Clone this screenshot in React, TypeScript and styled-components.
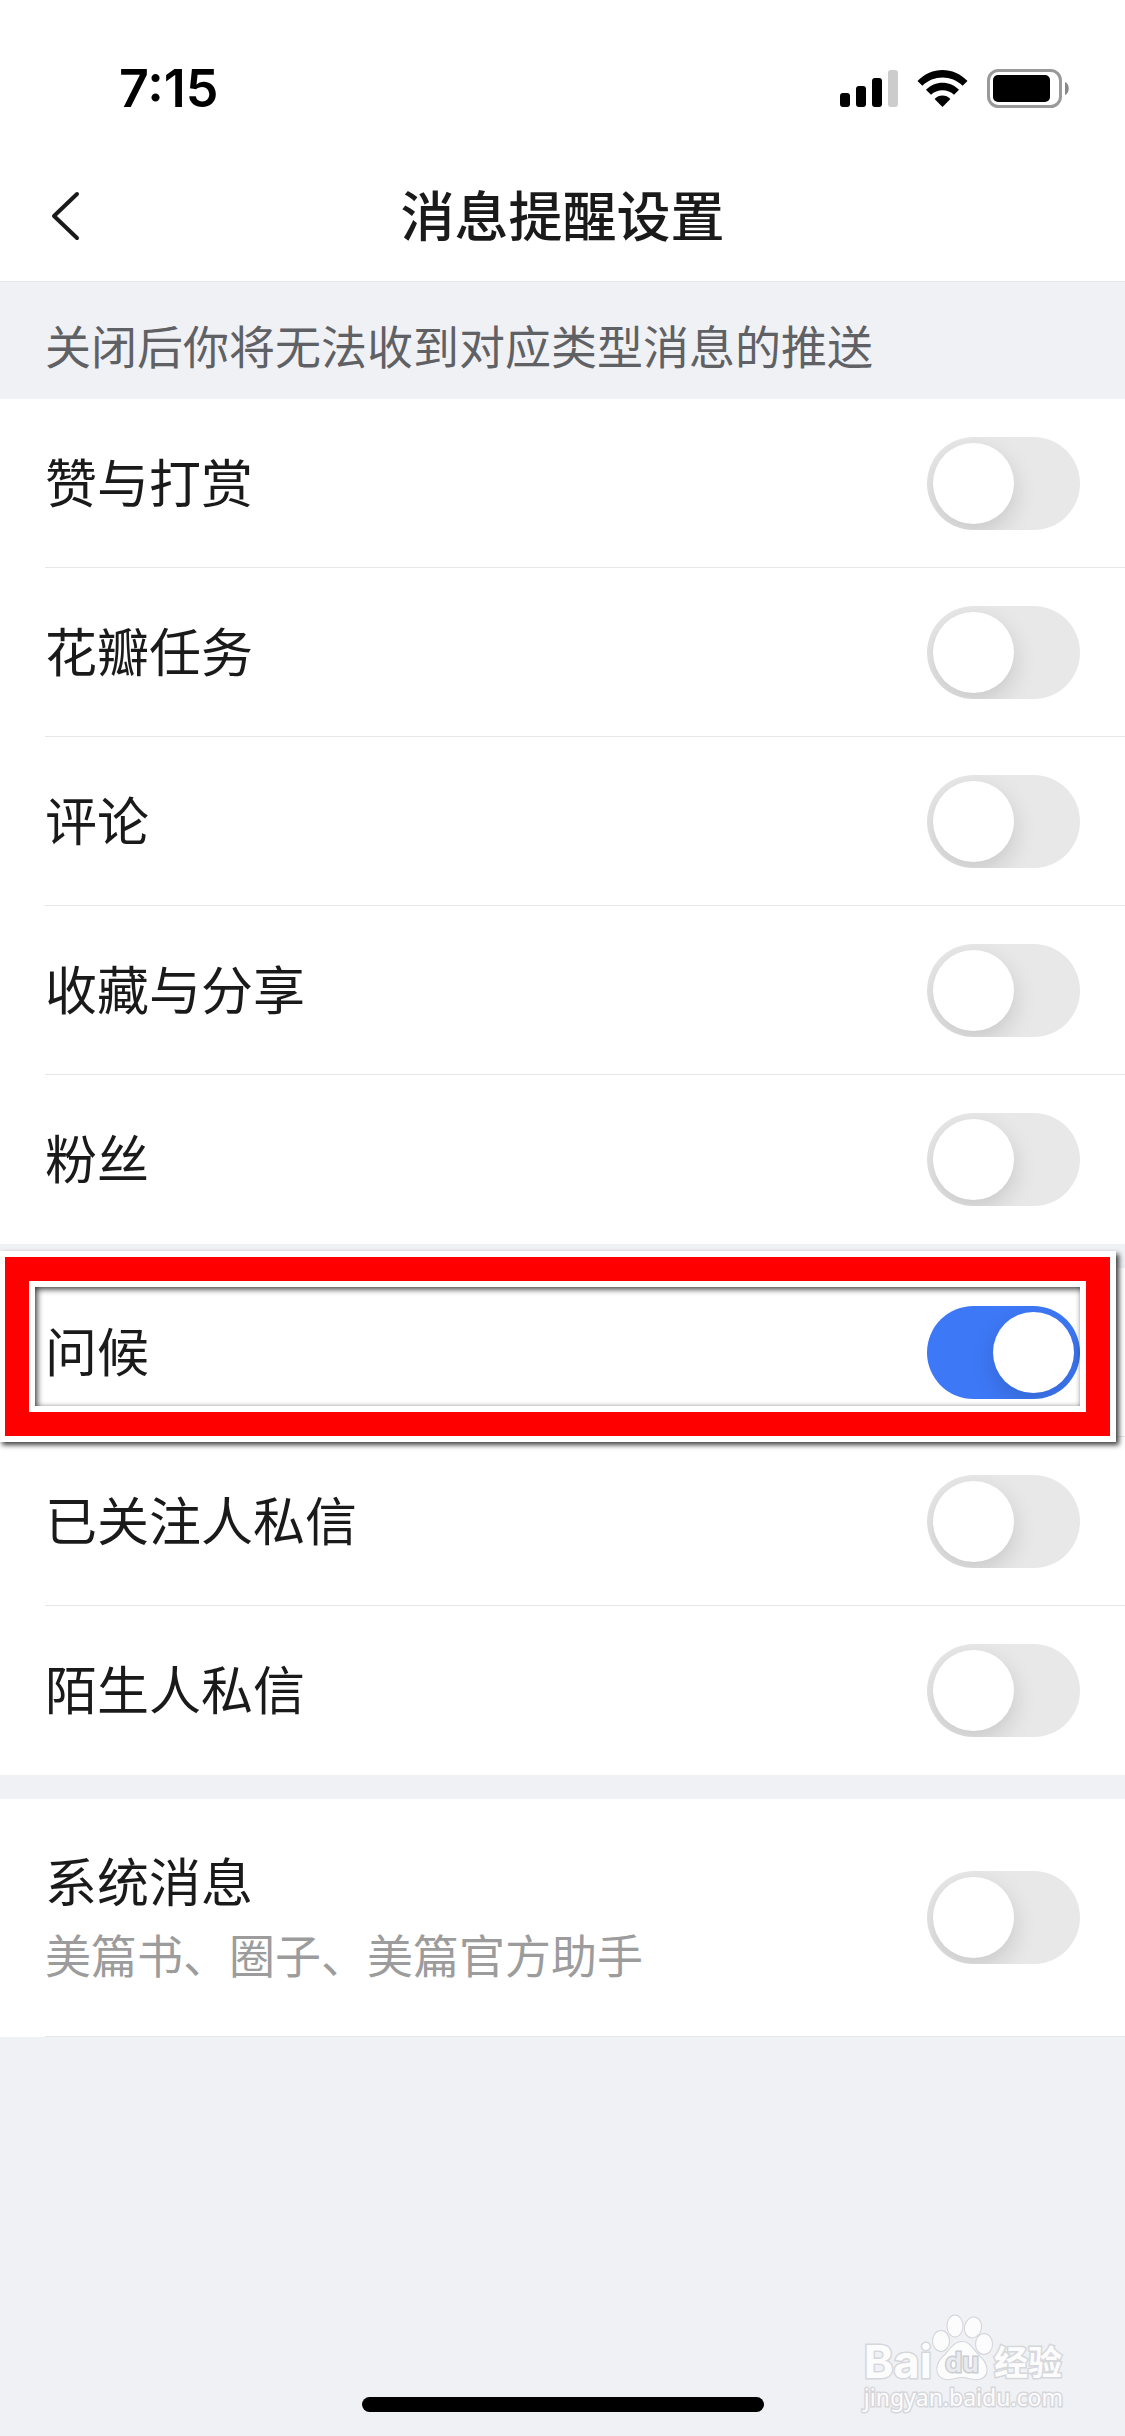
import React, { useState } from "react";
import styled, { createGlobalStyle } from "styled-components";

const cjk = `"Noto Sans CJK SC", "Noto Sans", sans-serif`;

const GlobalStyle = createGlobalStyle`
  *, *::before, *::after { box-sizing: border-box; }
  body { margin: 0; background: #f0f1f5; }
`;

const Page = styled.div`
  position: relative;
  display: flex;
  flex-direction: column;
  min-height: 100vh;
  overflow: hidden;
  background: #f0f1f5;
  color: #1a1a1a;
  font-family: ${cjk};
`;

const StatusBar = styled.div`
  display: flex;
  align-items: center;
  justify-content: space-between;
  height: 132px;
  padding: 45px 56px 0 119px;
  background: #fff;
`;

const Time = styled.time`
  color: #000;
  font: 600 52px/87px Inter, sans-serif;
`;

const StatusIcons = styled.div`
  display: flex;
  align-items: center;
  gap: 19px;
`;

const NavBar = styled.header`
  display: grid;
  grid-template-columns: 84px 1fr 84px;
  align-items: center;
  height: 150px;
  padding: 18px 45px 0;
  border-bottom: 1px solid #e6e7ea;
  background: #fff;
`;

const BackButton = styled.button`
  display: flex;
  align-items: center;
  height: 84px;
  padding: 0 5px;
  border: 0;
  background: none;
  color: #1a1a1a;
`;

const Title = styled.h1`
  margin: 0;
  padding-bottom: 4px;
  text-align: center;
  font-size: 54px;
  font-weight: 500;
  line-height: 72px;
`;

const Notice = styled.p`
  margin: 0;
  padding: 30px 45px 22px;
  color: #606164;
  font-size: 46px;
  line-height: 65px;
`;

const Groups = styled.main`
  display: flex;
  flex-direction: column;
  gap: 24px;
`;

const Group = styled.section`
  background: #fff;
`;

const Row = styled.div<{ $tall?: boolean; $divider?: boolean }>`
  position: relative;
  display: flex;
  align-items: center;
  justify-content: space-between;
  min-height: ${(p) => (p.$tall ? 238 : 169)}px;
  padding: ${(p) => (p.$tall ? "0 45px 1px" : "0 45px")};

  &::after {
    content: "";
    display: ${(p) => (p.$divider ? "block" : "none")};
    position: absolute;
    left: 45px;
    right: 0;
    bottom: 0;
    height: 1px;
    background: #e6e6e6;
  }
`;

const RowText = styled.label`
  display: flex;
  flex-direction: column;
  gap: 4px;
  padding-bottom: 5px;
`;

const RowTitle = styled.span`
  font-size: 52px;
  line-height: 72px;
`;

const RowHint = styled.span`
  color: #9c9c9c;
  font-size: 46px;
  line-height: 66px;
`;

const Switch = styled.input`
  appearance: none;
  flex: none;
  display: block;
  width: 153px;
  height: 93px;
  margin: 0;
  padding: 6px;
  overflow: hidden;
  border-radius: 47px;
  background: #e8e8e8;

  &::before {
    content: "";
    display: block;
    width: 81px;
    height: 81px;
    border-radius: 50%;
    background: #fff;
    box-shadow: 0 9px 24px rgba(0, 0, 0, 0.14);
  }

  &:checked {
    background: #3d78f6;
  }

  &:checked::before {
    margin-left: auto;
  }
`;

const Highlight = styled.span`
  position: absolute;
  z-index: 1;
  top: -11px;
  right: 15px;
  bottom: 1px;
  left: 5px;
  border: 24px solid #f00;
  box-shadow:
    0 0 0 6px #fff,
    3px 3px 5px 6px rgba(0, 0, 0, 0.75),
    inset 0 0 0 6px #fff,
    inset 2px 2px 6px 6px rgba(0, 0, 0, 0.8);
  pointer-events: none;
`;

const Footer = styled.footer`
  display: flex;
  justify-content: center;
  margin-top: auto;
  padding: 0 0 24px;
`;

const HomeIndicator = styled.div`
  width: 402px;
  height: 15px;
  border-radius: 8px;
  background: #000;
`;

const Watermark = styled.div`
  position: absolute;
  right: 62px;
  bottom: 24px;
  display: flex;
  flex-direction: column;
  color: #fcfcfd;
  -webkit-text-stroke: 3px #d6d7db;
  paint-order: stroke fill;
`;

const WatermarkBrand = styled.div`
  display: flex;
  align-items: flex-end;
  height: 68px;
`;

const BrandLatin = styled.span`
  font: 700 45px/40px Inter, sans-serif;
`;

const BrandHan = styled.span`
  font-size: 34px;
  font-weight: 700;
  line-height: 42px;
`;

const WatermarkUrl = styled.span`
  font: 400 23px/30px "Noto Sans", sans-serif;
`;

const SignalIcon = () => (
  <svg width="58" height="37" viewBox="0 0 58 37" aria-hidden="true">
    <rect x="0" y="23" width="10" height="14" rx="3" />
    <rect x="16" y="16" width="10" height="21" rx="3" />
    <rect x="32" y="8" width="10" height="29" rx="3" />
    <rect x="48" y="0" width="10" height="37" rx="3" fill="#ccc" />
  </svg>
);

const WifiIcon = () => (
  <svg width="51" height="37" viewBox="0 0 51 37" aria-hidden="true">
    <path d="M0.5 11 C14.5 -3.6 36.5 -3.6 50.5 11 L45.6 15.7 C34.5 4.7 16.5 4.7 5.4 15.7 Z" />
    <path d="M9 19.8 C18 10.4 33 10.4 42 19.8 L37 24.8 C31 18.6 20 18.6 14 24.8 Z" />
    <path d="M17.6 29 C22 24.4 29 24.4 33.4 29 L25.5 37 Z" />
  </svg>
);

const BatteryIcon = () => (
  <svg width="82" height="39" viewBox="0 0 82 39" aria-hidden="true">
    <rect x="1.5" y="1.5" width="72" height="36" rx="10" fill="none" stroke="#999" strokeWidth="3" />
    <rect x="6" y="6" width="57" height="27" rx="5" />
    <path d="M78 13 C83 15 83 24 78 26 Z" fill="#888" />
  </svg>
);

const BackIcon = () => (
  <svg width="30" height="50" viewBox="0 0 30 50" fill="none" aria-hidden="true">
    <path d="M27 3 L4 25 L27 47" stroke="currentColor" strokeWidth="4" strokeLinecap="round" strokeLinejoin="round" />
  </svg>
);

const PawText = styled.text`
  font: 600 27px Inter, sans-serif;
  fill: #e9eaee;
  stroke: #cbccd1;
  stroke-width: 3px;
`;

const PawIcon = () => (
  <svg width="62" height="68" viewBox="0 0 62 68" fill="#fcfcfd" stroke="#d3d4d9" strokeWidth="2" aria-hidden="true">
    <ellipse cx="9" cy="27" rx="8" ry="10" />
    <ellipse cx="23" cy="12" rx="7.5" ry="10.5" />
    <ellipse cx="41" cy="13.5" rx="8" ry="10" transform="rotate(12 41 13.5)" />
    <ellipse cx="52" cy="30" rx="8" ry="10" />
    <path d="M30 28 C38 28 41 36 48 43 C57 51 57 64 46 65 C40 66 36 63 30 63 C24 63 20 66 14 65 C3 63 3 51 11 43 C18 37 21 28 30 28 Z" />
    <PawText x="30" y="58" textAnchor="middle">du</PawText>
  </svg>
);

type Item = { id: string; title: string; hint?: string; marked?: boolean; divider?: boolean };

const groups: Item[][] = [
  [
    { id: "reward", title: "赞与打赏", divider: true },
    { id: "task", title: "花瓣任务", divider: true },
    { id: "comment", title: "评论", divider: true },
    { id: "share", title: "收藏与分享", divider: true },
    { id: "fans", title: "粉丝" },
  ],
  [
    { id: "greeting", title: "问候", marked: true, divider: true },
    { id: "followed", title: "已关注人私信", divider: true },
    { id: "stranger", title: "陌生人私信" },
  ],
  [{ id: "system", title: "系统消息", hint: "美篇书、圈子、美篇官方助手", divider: true }],
];

export default function App() {
  const [enabled, setEnabled] = useState<Record<string, boolean>>({ greeting: true });

  return (
    <>
      <GlobalStyle />
      <Page>
        <StatusBar>
          <Time>7:15</Time>
          <StatusIcons>
            <SignalIcon />
            <WifiIcon />
            <BatteryIcon />
          </StatusIcons>
        </StatusBar>
        <NavBar>
          <BackButton type="button" aria-label="返回">
            <BackIcon />
          </BackButton>
          <Title>消息提醒设置</Title>
        </NavBar>
        <Notice>关闭后你将无法收到对应类型消息的推送</Notice>
        <Groups>
          {groups.map((items) => (
            <Group key={items[0].id}>
              {items.map((item) => (
                <Row key={item.id} $tall={Boolean(item.hint)} $divider={item.divider}>
                  <RowText htmlFor={item.id}>
                    <RowTitle>{item.title}</RowTitle>
                    {item.hint && <RowHint>{item.hint}</RowHint>}
                  </RowText>
                  <Switch
                    id={item.id}
                    type="checkbox"
                    checked={Boolean(enabled[item.id])}
                    onChange={(e) => setEnabled({ ...enabled, [item.id]: e.target.checked })}
                  />
                  {item.marked && <Highlight />}
                </Row>
              ))}
            </Group>
          ))}
        </Groups>
        <Footer>
          <HomeIndicator />
        </Footer>
        <Watermark>
          <WatermarkBrand>
            <BrandLatin>Bai</BrandLatin>
            <PawIcon />
            <BrandHan>经验</BrandHan>
          </WatermarkBrand>
          <WatermarkUrl>jingyan.baidu.com</WatermarkUrl>
        </Watermark>
      </Page>
    </>
  );
}
